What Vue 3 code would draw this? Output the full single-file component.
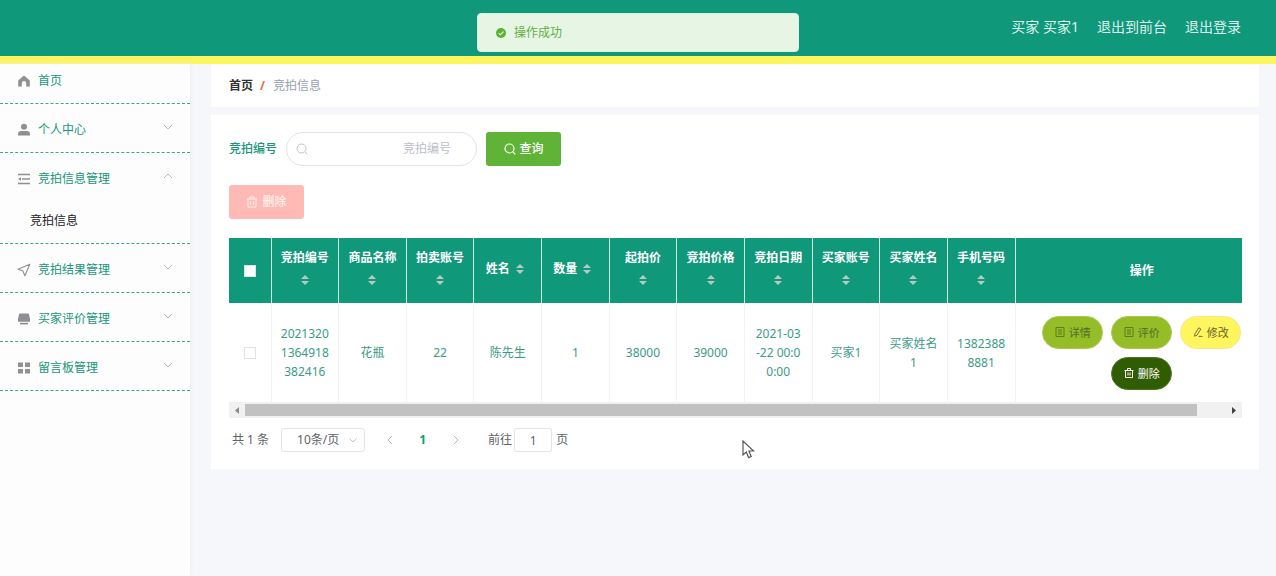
<script setup>
import { ref } from 'vue'

const menu = [
  { label: '首页', icon: 'home' },
  { label: '个人中心', icon: 'user', arrow: 'down' },
  { label: '竞拍信息管理', icon: 'fold', arrow: 'up', children: ['竞拍信息'] },
  { label: '竞拍结果管理', icon: 'send', arrow: 'down' },
  { label: '买家评价管理', icon: 'device', arrow: 'down' },
  { label: '留言板管理', icon: 'grid', arrow: 'down' },
]

const columns = [
  { key: 'no', label: '竞拍编号' },
  { key: 'goods', label: '商品名称' },
  { key: 'seller', label: '拍卖账号' },
  { key: 'name', label: '姓名' },
  { key: 'count', label: '数量' },
  { key: 'start', label: '起拍价' },
  { key: 'price', label: '竞拍价格' },
  { key: 'date', label: '竞拍日期' },
  { key: 'buyer', label: '买家账号' },
  { key: 'buyerName', label: '买家姓名' },
  { key: 'phone', label: '手机号码' },
]

const rows = [
  {
    no: '20213201364918382416',
    goods: '花瓶',
    seller: '22',
    name: '陈先生',
    count: '1',
    start: '38000',
    price: '39000',
    date: '2021-03-22 00:00:00',
    buyer: '买家1',
    buyerName: '买家姓名1',
    phone: '13823888881',
  },
]

const keyword = ref('')
const jump = ref('1')
</script>

<template>
  <div class="page">
    <header class="topbar">
      <nav class="toplinks">
        <span>买家 买家1</span>
        <a href="#">退出到前台</a>
        <a href="#">退出登录</a>
      </nav>
    </header>

    <div class="toast" role="status">
      <svg width="10" height="10" viewBox="0 0 10 10">
        <circle cx="5" cy="5" r="5" fill="#5db135" />
        <path d="M2.6 5.1 4.4 6.8 7.5 3.5" fill="none" stroke="#e7f5e4" stroke-width="1.1" />
      </svg>
      <span>操作成功</span>
    </div>

    <div class="body">
      <aside class="sidebar">
        <ul class="menu">
          <li v-for="item in menu" :key="item.label" :class="{ first: item.icon === 'home' }">
            <a href="#" class="item">
              <svg class="icon" width="14" height="14" viewBox="0 0 14 14">
                <path v-if="item.icon === 'home'" d="M7 1.6 1.2 6.4v6.2h3.6V9.2a2.2 2.2 0 0 1 4.4 0v3.4h3.6V6.4z" fill="#8e9093" />
                <g v-else-if="item.icon === 'user'" fill="#8e9093">
                  <circle cx="7" cy="3.8" r="3" />
                  <path d="M1 12.6V11c0-2 1.4-3 3-3h6c1.6 0 3 1 3 3v1.6z" />
                </g>
                <g v-else-if="item.icon === 'fold'" fill="none" stroke="#8e9093" stroke-width="1.5">
                  <path d="M1 2.5h12M5 7h8M1 11.5h12" />
                  <path d="M4 5.2 1 7l3 1.8z" fill="#8e9093" stroke="none" />
                </g>
                <path v-else-if="item.icon === 'send'" d="M12.8 1.2 1 6.2l4.8 1.5 2.1 5z" fill="none" stroke="#8e9093" stroke-width="1.1" stroke-linejoin="round" />
                <g v-else-if="item.icon === 'device'" fill="#8e9093">
                  <path d="M2.3 1.5h9.4l1.3 5v3.3H1V6.5z" />
                  <path d="M3 10.8h8v1.7H3z" />
                </g>
                <path v-else d="M1 1.5h5V6H1zM8 1.5h5V6H8zM1 8h5v4.5H1zM8 8h5v4.5H8z" fill="#8e9093" />
              </svg>
              <span class="label">{{ item.label }}</span>
              <svg v-if="item.arrow" class="chev" width="10" height="6" viewBox="0 0 10 6">
                <path :d="item.arrow === 'up' ? 'M1 5 5 1 9 5' : 'M1 1 5 5 9 1'" fill="none" stroke="#b4b7bb" />
              </svg>
            </a>
            <a v-for="c in item.children" :key="c" href="#" class="sub">{{ c }}</a>
          </li>
        </ul>
      </aside>

      <main class="main">
        <nav class="crumbs">
          <a href="#">首页</a><i>/</i><span>竞拍信息</span>
        </nav>

        <section class="card">
          <form class="search" @submit.prevent>
            <label for="kw">竞拍编号</label>
            <div class="field">
              <svg width="12" height="12" viewBox="0 0 12 12" fill="none" stroke="#bfc3ca">
                <circle cx="5.5" cy="5.5" r="4.5" />
                <path d="m8.8 8.8 2.5 2.5" />
              </svg>
              <input id="kw" v-model="keyword" type="text" placeholder="竞拍编号" />
            </div>
            <button class="btn query" type="submit">
              <svg width="12" height="12" viewBox="0 0 12 12" fill="none" stroke="currentColor" stroke-width="1.2">
                <circle cx="5.5" cy="5.5" r="4.5" />
                <path d="m8.8 8.8 2.5 2.5" />
              </svg>查询
            </button>
          </form>

          <button class="btn remove" type="button">
            <svg width="12" height="12" viewBox="0 0 12 12" fill="none" stroke="currentColor">
              <path d="M1 3h10M4 3V1h4v2M2 3v8h8V3M4.6 5v4M7.4 5v4" />
            </svg>删除
          </button>

          <table class="grid">
            <colgroup>
              <col class="c-check" />
              <col v-for="c in columns" :key="c.key" />
              <col class="c-act" />
            </colgroup>
            <thead>
              <tr>
                <th><input type="checkbox" aria-label="全选" /></th>
                <th v-for="c in columns" :key="c.key">
                  <span class="th">
                    <span>{{ c.label }}</span>
                    <span class="sort">
                      <svg width="8" height="10" viewBox="0 0 8 10" fill="#b5c9c5">
                        <path d="M4 0 8 4H0zM0 6h8L4 10z" />
                      </svg>
                    </span>
                  </span>
                </th>
                <th class="act">操作</th>
              </tr>
            </thead>
            <tbody>
              <tr v-for="r in rows" :key="r.no">
                <td><input type="checkbox" aria-label="选择" /></td>
                <td v-for="c in columns" :key="c.key">{{ r[c.key] }}</td>
                <td class="act">
                  <div class="actions">
                    <button type="button" class="pill lime">
                      <svg width="10" height="10" viewBox="0 0 10 10" fill="none" stroke="currentColor" stroke-width=".8">
                        <path d="M1 .5h8v9H1zM3 3h4M3 5h4M3 7h4" />
                      </svg>详情
                    </button>
                    <button type="button" class="pill lime">
                      <svg width="10" height="10" viewBox="0 0 10 10" fill="none" stroke="currentColor" stroke-width=".8">
                        <path d="M1 .5h8v9H1zM3 3h4M3 5h4M3 7h4" />
                      </svg>评价
                    </button>
                    <button type="button" class="pill yellow">
                      <svg width="10" height="10" viewBox="0 0 10 10" fill="none" stroke="currentColor" stroke-width=".9">
                        <path d="M5.8.8 7.8 2 4 8.2 1.6 9.2 1.9 6.8zM5.5 9.4H9.5" />
                      </svg>修改
                    </button>
                    <button type="button" class="pill dark">
                      <svg width="10" height="10" viewBox="0 0 10 10" fill="none" stroke="currentColor">
                        <path d="M.5 2.5h9M3.5 2.5v-2h3v2M1.5 2.5v7h7v-7M4 4.5v3M6 4.5v3" />
                      </svg>删除
                    </button>
                  </div>
                </td>
              </tr>
            </tbody>
          </table>

          <div class="scroll">
            <svg width="16" height="16" viewBox="0 0 16 16"><path d="M10 5v7L6 8.500z" fill="#8b8b8b" /></svg>
            <div class="track"><div class="thumb"></div></div>
            <svg width="16" height="16" viewBox="0 0 16 16"><path d="M6 5v7l4-3.500z" fill="#404040" /></svg>
          </div>

          <div class="pager">
            <span>共 1 条</span>
            <div class="size">
              <select aria-label="每页条数"><option>10条/页</option></select>
              <svg width="8" height="5" viewBox="0 0 8 5" fill="none" stroke="#c0c4cc"><path d="M.5.5 4 4 7.500.5" /></svg>
            </div>
            <button type="button" aria-label="上一页">
              <svg width="6" height="10" viewBox="0 0 6 10" fill="none" stroke="#b4b8c0"><path d="M5 1 1 5l4 4" /></svg>
            </button>
            <button type="button" class="current">1</button>
            <button type="button" aria-label="下一页">
              <svg width="6" height="10" viewBox="0 0 6 10" fill="none" stroke="#b4b8c0"><path d="m1 1 4 4-4 4" /></svg>
            </button>
            <label class="jump">前往<input v-model="jump" type="text" />页</label>
          </div>
        </section>
      </main>
    </div>

    <svg class="cursor" width="13" height="20" viewBox="0 0 13 20">
      <path d="M1 1v14l3.300-3 2.300 5.600 2.600-1.100L6.900 11h4.600z" fill="#fff" stroke="#55585c" stroke-width="1.200" />
    </svg>
  </div>
</template>

<style>
body {
  background: #f6f7fa;
}
</style>

<style scoped>
.page {
  position: relative;
  display: flex;
  flex-direction: column;
  min-height: 100vh;
  font: 12px/18px "Noto Sans", "Noto Sans CJK SC", sans-serif;
  color: #606266;
}
.page * {
  box-sizing: border-box;
}
a {
  color: inherit;
  text-decoration: none;
}
button,
input,
select {
  font: inherit;
  color: inherit;
}
.topbar {
  display: flex;
  justify-content: flex-end;
  height: 64px;
  padding: 16px 35px 0 0;
  background: #10987b;
  border-bottom: 8px solid #fff55f;
}
.toplinks {
  display: flex;
  gap: 18px;
  font-size: 14px;
  line-height: 22px;
  color: #dff3ec;
}
.toast {
  position: absolute;
  top: 13px;
  left: 50%;
  transform: translateX(-50%);
  display: flex;
  align-items: center;
  gap: 8px;
  width: 322px;
  height: 39px;
  padding-left: 18px;
  border: 1px solid #d9f3dc;
  border-radius: 4px;
  background: #e7f5e5;
  color: #62b03e;
}
.body {
  display: flex;
  flex: 1;
}
.sidebar {
  flex: none;
  width: 190px;
  background: #fdfdfd;
  box-shadow: 1px 0 3px #eceef2;
}
.menu {
  list-style: none;
  margin: 0;
  padding: 0;
}
.menu li {
  border-bottom: 1px dashed #3da68c;
}
.item {
  display: flex;
  align-items: center;
  height: 48px;
  padding: 4px 17px 0;
  color: #17967a;
}
.first .item {
  height: 39px;
  padding-top: 0;
  padding-bottom: 6px;
}
.label {
  flex: 1;
  padding-left: 7px;
}
.chev {
  margin-bottom: 6px;
}
.sub {
  display: block;
  height: 42px;
  padding: 11px 0 0 30px;
  color: #222;
}
.main {
  flex: 1;
  min-width: 0;
  padding: 0 17px 0 21px;
}
.crumbs {
  display: flex;
  align-items: center;
  height: 43px;
  padding-left: 18px;
  margin-bottom: 8px;
  background: #fff;
  color: #97a0b2;
}
.crumbs a {
  font-weight: 700;
  color: #303133;
}
.crumbs i {
  margin: 0 8px 0 7px;
  font-style: normal;
  font-weight: 700;
  color: #ee6a3c;
}
.card {
  padding: 17px 17px 17px 18px;
  background: #fff;
}
.search {
  display: flex;
  align-items: center;
  margin-bottom: 19px;
}
.search label {
  color: #17967a;
  font-weight: 500;
}
.field {
  display: flex;
  align-items: center;
  width: 191px;
  height: 34px;
  margin: 0 9px;
  padding: 0 25px 0 9px;
  border: 1px solid #e2e4ea;
  border-radius: 17px;
}
.field input {
  flex: 1;
  min-width: 0;
  padding: 0;
  border: 0;
  outline: 0;
  background: none;
  text-align: right;
}
.field input::placeholder {
  color: #bcc0c8;
}
.btn {
  display: flex;
  align-items: center;
  justify-content: center;
  gap: 4px;
  width: 75px;
  height: 34px;
  padding: 0;
  border: 0;
  border-radius: 3px;
  color: #fff;
  font-weight: 500;
}
.query {
  background: #5fb336;
}
.remove {
  margin-bottom: 19px;
  background: #ffbab5;
  color: #fff0ee;
}
.grid {
  width: 100%;
  table-layout: fixed;
  border-collapse: collapse;
}
.c-check {
  width: 42px;
}
.c-act {
  width: 227px;
}
th,
td {
  padding: 0 9px;
  text-align: center;
}
th {
  height: 65px;
  background: #10987b;
  color: #fff;
  font-weight: 700;
  border-right: 1px solid #cdebe2;
}
td {
  height: 99px;
  line-height: 19px;
  color: #3a9c84;
  word-break: break-all;
  border-right: 1px solid #f0f3f5;
}
th:last-child,
td:last-child {
  border-right: 0;
}
.th {
  display: flex;
  flex-wrap: wrap;
  justify-content: center;
  margin: 0 -2px;
  padding-bottom: 4px;
}
.sort {
  display: flex;
  align-items: center;
  justify-content: center;
  width: 20px;
  height: 22px;
}
.th > span:first-child {
  line-height: 22px;
}
th input,
td input {
  appearance: none;
  display: block;
  width: 12px;
  height: 12px;
  margin: 0 auto;
  border: 1px solid #dfe2e8;
  background: #fff;
}
th.act,
td.act {
  padding: 0 0 0 26px;
}
.actions {
  display: flex;
  flex-wrap: wrap;
  justify-content: center;
  gap: 8px;
}
.pill {
  display: flex;
  align-items: center;
  justify-content: center;
  gap: 4px;
  width: 61px;
  height: 33px;
  padding: 0;
  border: 1px solid #a9c950;
  border-radius: 17px;
  font-size: 11px;
}
.lime {
  background: #94bd28;
  color: #526b25;
}
.yellow {
  background: #fff55f;
  border-color: #f5e88a;
  color: #66622c;
}
.dark {
  background: #315d02;
  border-color: #4c7329;
  color: #fff;
}
.scroll {
  display: flex;
  height: 16px;
  background: #f1f1f1;
}
.track {
  flex: 1;
  padding: 2px 0;
}
.thumb {
  width: 97%;
  height: 12px;
  background: #c1c1c1;
}
.pager {
  display: flex;
  align-items: center;
  height: 24px;
  margin-top: 10px;
  padding-left: 3px;
}
.size {
  display: flex;
  align-items: center;
  width: 84px;
  height: 24px;
  margin: 0 8px 0 12px;
  padding-right: 7px;
  border: 1px solid #e0e3e9;
  border-radius: 3px;
}
.size select {
  flex: 1;
  min-width: 0;
  appearance: none;
  padding: 0 0 0 15px;
  border: 0;
  background: none;
}
.pager button {
  display: flex;
  align-items: center;
  justify-content: center;
  width: 33px;
  height: 24px;
  padding: 0;
  border: 0;
  background: none;
}
.pager .current {
  color: #13a06f;
  font-weight: 700;
}
.jump {
  display: flex;
  align-items: center;
  margin-left: 16px;
}
.jump input {
  width: 38px;
  height: 24px;
  margin: 0 4px 0 2px;
  padding: 0;
  border: 1px solid #e0e3e9;
  border-radius: 3px;
  text-align: center;
}
.cursor {
  position: absolute;
  top: 440px;
  left: 742px;
}
</style>
